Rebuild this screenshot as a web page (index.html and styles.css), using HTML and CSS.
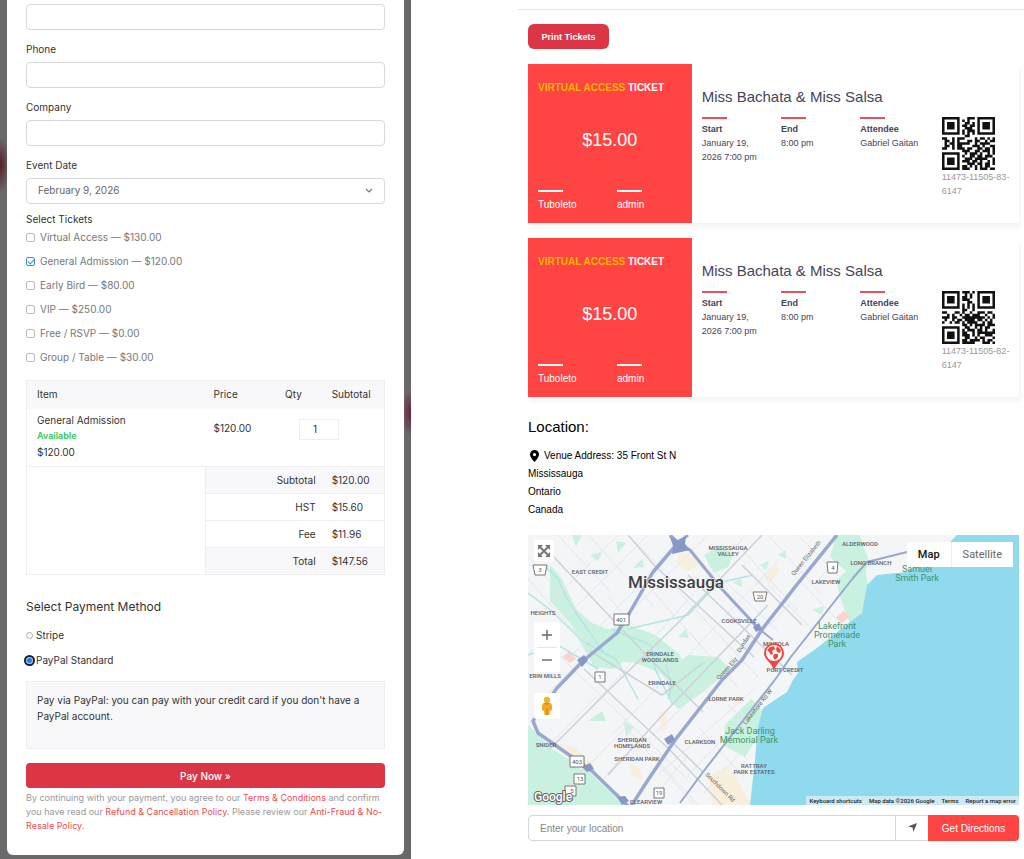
FILE: index.html
```html
<!DOCTYPE html>
<html lang="en">
<head>
    <meta charset="utf-8">
    <meta name="viewport" content="width=device-width, initial-scale=1.0">
    <title>Event Checkout</title>
    <link rel="stylesheet" href="styles.css">
</head>
<body>
    <div class="backdrop">
        <form class="checkout">
            <div class="field">
                <input type="email" class="text-input" aria-label="Email">
            </div>
            <div class="field">
                <label for="phone">Phone</label>
                <input type="tel" id="phone" class="text-input">
            </div>
            <div class="field">
                <label for="company">Company</label>
                <input type="text" id="company" class="text-input">
            </div>
            <div class="field">
                <label for="event-date">Event Date</label>
                <div class="select-wrap">
                    <select id="event-date" class="text-input">
                        <option>February 9, 2026</option>
                    </select>
                    <svg class="chevron" viewBox="0 0 8 6"><path d="M1 1l3 3 3-3" fill="none" stroke="#777" stroke-width="1.2"/></svg>
                </div>
            </div>

            <fieldset class="tickets">
                <legend>Select Tickets</legend>
                <label><input type="checkbox"> Virtual Access — $130.00</label>
                <label><input type="checkbox" checked> General Admission — $120.00</label>
                <label><input type="checkbox"> Early Bird — $80.00</label>
                <label><input type="checkbox"> VIP — $250.00</label>
                <label><input type="checkbox"> Free / RSVP — $0.00</label>
                <label><input type="checkbox"> Group / Table — $30.00</label>
            </fieldset>

            <table class="cart">
                <colgroup>
                    <col class="col-item"><col class="col-price"><col class="col-qty"><col class="col-sub">
                </colgroup>
                <thead>
                    <tr><th>Item</th><th>Price</th><th>Qty</th><th>Subtotal</th></tr>
                </thead>
                <tbody>
                    <tr class="item-row">
                        <td>General Admission<span class="available">Available</span>$120.00</td>
                        <td>$120.00</td>
                        <td colspan="2" class="qty-cell"><input type="text" class="qty" value="1" aria-label="Quantity"></td>
                    </tr>
                    <tr class="total-row shaded">
                        <td rowspan="4" class="blank"></td>
                        <td colspan="2" class="total-label">Subtotal</td><td>$120.00</td>
                    </tr>
                    <tr class="total-row"><td colspan="2" class="total-label">HST</td><td>$15.60</td></tr>
                    <tr class="total-row"><td colspan="2" class="total-label">Fee</td><td>$11.96</td></tr>
                    <tr class="total-row shaded"><td colspan="2" class="total-label">Total</td><td>$147.56</td></tr>
                </tbody>
            </table>

            <fieldset class="methods">
                <legend>Select Payment Method</legend>
                <label><input type="radio" name="method"> Stripe</label>
                <label><input type="radio" name="method" checked> PayPal Standard</label>
            </fieldset>
            <p class="method-note">Pay via PayPal: you can pay with your credit card if you don't have a PayPal account.</p>
            <button type="button" class="pay-btn">Pay Now »</button>
            <p class="legal">By continuing with your payment, you agree to our <a href="#">Terms &amp; Conditions</a> and confirm you have read our <a href="#">Refund &amp; Cancellation Policy</a>. Please review our <a href="#">Anti-Fraud &amp; No-Resale Policy</a>.</p>
        </form>
    </div>

    <main class="order">
        <button type="button" class="print-btn">Print Tickets</button>

        <article class="ticket">
            <div class="ticket-stub">
                <h3><span>VIRTUAL ACCESS</span> TICKET</h3>
                <p class="price">$15.00</p>
                <div class="stub-names"><span>Tuboleto</span><span>admin</span></div>
            </div>
            <div class="ticket-body">
                <h2>Miss Bachata &amp; Miss Salsa</h2>
                <div class="details">
                    <div class="detail"><b>Start</b><p>January 19, 2026 7:00 pm</p></div>
                    <div class="detail"><b>End</b><p>8:00 pm</p></div>
                    <div class="detail"><b>Attendee</b><p>Gabriel Gaitan</p></div>
                    <div class="code">
                        <svg class="qr" data-rows="111111100011101111111 100000101010001000001 101110100110101011101 101110101101101011101 101110100111001011101 100000101011101000001 111111101010101111111 000000000110000000000 110010111000010110101 011010100011011001011 010110111110010111100 011010110000111010011 110010111011001101101 000000001110011011101 111111100101110100101 100000101001101101110 101110100111011111001 101110101110110100101 101110100011101101101 100000101101010101100 111111101110010111011"></svg>
                        <p>11473-11505-83-6147</p>
                    </div>
                </div>
            </div>
        </article>

        <article class="ticket">
            <div class="ticket-stub">
                <h3><span>VIRTUAL ACCESS</span> TICKET</h3>
                <p class="price">$15.00</p>
                <div class="stub-names"><span>Tuboleto</span><span>admin</span></div>
            </div>
            <div class="ticket-body">
                <h2>Miss Bachata &amp; Miss Salsa</h2>
                <div class="details">
                    <div class="detail"><b>Start</b><p>January 19, 2026 7:00 pm</p></div>
                    <div class="detail"><b>End</b><p>8:00 pm</p></div>
                    <div class="detail"><b>Attendee</b><p>Gabriel Gaitan</p></div>
                    <div class="code">
                        <svg class="qr" data-rows="111111101110101111111 100000100101001000001 101110101101001011101 101110101110001011101 101110100011001011101 100000101010101000001 111111101010101111111 000000001100100000000 110001101001001110110 001010010110111001001 111011001111111110101 010010110111101101010 100101101011110010110 000000001101011110111 111111100110010101100 100000101011101101001 101110101100101111111 101110101110101001110 101110100110010110001 100000101101111010110 111111101111100011101"></svg>
                        <p>11473-11505-82-6147</p>
                    </div>
                </div>
            </div>
        </article>

        <section class="location">
            <h2>Location:</h2>
            <address>
                <span class="venue"><svg class="pin" viewBox="0 0 12 14"><path fill-rule="evenodd" d="M6 1a4.500 4.500 0 0 0-4.500 4.500C1.500 8.500 6 13 6 13s4.500-4.500 4.500-7.500A4.500 4.500 0 0 0 6 1zm0 3a1.600 1.600 0 1 1 0 3.200A1.600 1.600 0 0 1 6 4z"/></svg>Venue Address: 35 Front St N</span>
                Mississauga<br>Ontario<br>Canada
            </address>

            <div class="map">
                <svg class="map-canvas" viewBox="0 0 491 270" preserveAspectRatio="xMidYMid slice" role="img" aria-label="Map of Mississauga">
                    <rect width="491" height="270" fill="#f3f5f7"/>
                    <!-- parks -->
                    <g fill="#c9f1df">
                        <path d="M22 30l12 14 14 30 16 14 26 10 14 22-18 14-20-2-10-18-14-26-20-22z"/>
                        <path d="M74 96l26-6 28 10 24 20 10 26-14 8-16-16-24-10-20-2z"/>
                        <path d="M142 134l18-14 30 2 12 12-28 24-24 16-10-12z"/>
                        <path d="M176 20l14-8 16 6-6 14-14 6z"/>
                        <path d="M308 0h24l8 24-2 14 2 14-6 26-12 10-8-20-6-22 10-10-16-14z"/>
                        <path d="M0 190l24 24 36 22 36 34H0z"/>
                        <path d="M197 190l26-26 12 12-4 24-14 22-22-12z"/>
                        <path d="M44 0h10l-6 12zM88 6l10 2-8 10zM62 20l12-3-4 9zM105 33l9-9 2 8zM205 48l8-5 1 9zM150 102l8-8 3 9zM96 186l10 6-8 10zM60 186l14-10 4 10zM284 75l12-4-2 9zM250 20l8-5v9zM232 30l9-4-3 9z"/>
                    </g>
                    <g fill="#f8efdc">
                        <path d="M151 17l14 4 6 10-12 6-10-8zM236 42l12-12 4 6-11 13zM26 208l20 4 22 20-16 2zM130 180l7-6 3 18-6 6zM180 242l20-12 24 40h-40zM102 228l10 6 4 12-12-6z"/>
                    </g>
                    <path d="M308 82l8-6 6 6-8 6zM34 122l8-6 6 8-6 4z" fill="#f8d4cf"/>
                    <!-- creeks -->
                    <path d="M18 32l12 12 8 18 10 16 14 20 10 14 6 8M0 58l24 18 30 30 34 18 22 40M0 120l30-10 40 24M145 170l-18-36-4-24-40-16M138 130l6 20-4 14M225 40l-35 8-30 32-60 14" fill="none" stroke="#b2e5e4" stroke-width="1.500"/>
                    <!-- local streets -->
                    <path d="M30 0l52 56M60 0l66 72M100 0l36 36M0 22l60 66M0 44l58 66M10 100l150 145M80 62l90 100M110 40l100 112M150 56l80 86M180 30l70 66M210 10l60 66M240 0l52 58M270 0l50 50M20 70L90 0M0 120l120-120M44 120l116-120M20 158L180 0M60 176L218 0M84 200L252 24M100 224L262 70M130 240l98-88M160 240l82-84M176 258l60-66M4 228l64-66M40 252l60-62M10 262l40-50M60 262l34-40M120 270l40-50M330 0l-40 46M300 110l-60-60M318 94l-54-56M200 170l34 32M170 192l46 50M130 226l40 44M96 190l70 80" fill="none" stroke="#e3e6ec"/>
                    <path d="M24 20l96 102 55 55M56 134l86 81 52 55M62 116l72 44 41-32M22 214l60-60 70-68 82-86M80 240l60-66 100-104M100 0l26 30 100 92M160 40l104 100M142 205l33 32M214 30l60 60" fill="none" stroke="#cdd1da" stroke-width="1.500"/>
                    <!-- lake -->
                    <path d="M491 0h-62l-7 7-43 30-30 3-10 10-5 28-12 9-33 26-20 14 1 11-5 7-6 12-12 8-12 8-5 19-3 33-5 45h269z" fill="#90daee"/>
                    <!-- highways -->
                    <g fill="none" stroke="#9aa8cf" stroke-linejoin="round">
                        <path d="M379 17l-40 10-14 16-63 80-13 19-74 95-23 31M245 105l-15-12" stroke-width="2"/>
                        <path d="M142 0l8 8-25 29-23 40-13 21-34 28-26 27-24 33 5 12 54 38 38 37 18-28 27-40 47-60 20-20 21-32 22-28 10-13 42-52" stroke-width="3.500"/>
                        <path d="M160 0l-10 8 12 7 30 37 38 41" stroke-width="3"/>
                    </g>
                    <g fill="#8798c6">
                        <path d="M142 2l8 3 8-4-1 8 5 6-9 2-9 2 1-8zM49 125l7-5 4 5-6 7zM136 204l8-5 3 6-7 5zM54 232l8-4 4 6-7 3zM225 92l6-4 3 6-6 3zM89 262l8-1 4 5-7 4z"/>
                    </g>
                    <g class="shields">
                        <path d="M5 30h14l-2 10H7zM225 57h14l-2 9h-10zM86 79h15v11H86zM67 137h10v10H67zM299 27h11l-1 11h-9zM42 221h14v11H42zM46 239h11v10H46zM126 253h10v10h-10zM37 251h11v10H37z"/>
                        <text x="12" y="37">3</text><text x="232" y="64">20</text><text x="93" y="87">401</text><text x="72" y="144">1</text><text x="305" y="35">4</text><text x="49" y="229">403</text><text x="52" y="246">13</text><text x="131" y="260">19</text><text x="44" y="258">5</text>
                    </g>
                    <g class="areas">
                        <text x="62" y="39">EAST CREDIT</text>
                        <text x="200" y="15">MISSISSAUGA</text><text x="200" y="21">VALLEY</text>
                        <text x="332" y="11">ALDERWOOD</text><text x="343" y="30">LONG BRANCH</text>
                        <text x="298" y="49">LAKEVIEW</text><text x="211" y="88">COOKSVILLE</text>
                        <text x="15" y="80">HEIGHTS</text><text x="17" y="143">ERIN MILLS</text>
                        <text x="132" y="121">ERINDALE</text><text x="132" y="127">WOODLANDS</text>
                        <text x="134" y="150">ERINDALE</text><text x="198" y="166">LORNE PARK</text>
                        <text x="248" y="111">MINEOLA</text><text x="257" y="137">PORT CREDIT</text>
                        <text x="104" y="207">SHERIDAN</text><text x="104" y="213">HOMELANDS</text>
                        <text x="109" y="226">SHERIDAN PARK</text><text x="18" y="212">SNIDER</text>
                        <text x="172" y="209">CLARKSON</text><text x="226" y="233">RATTRAY</text>
                        <text x="226" y="239">PARK ESTATES</text><text x="118" y="269">CLEARVIEW</text>
                    </g>
                    <g class="roads">
                        <text transform="translate(266 41) rotate(-51)">Queen Elizabeth</text>
                        <text transform="translate(191 145) rotate(-47)">Queen Eliz</text>
                        <text transform="translate(218 190) rotate(-52)">Lakeshore Rd W</text>
                        <text transform="translate(177 240) rotate(45)">Southdown Rd</text>
                        <text transform="translate(212 118) rotate(-58)">Dundas</text>
                    </g>
                    <g class="park-names">
                        <text x="309" y="94">Lakefront</text><text x="309" y="103">Promenade</text><text x="309" y="112">Park</text>
                        <text x="389" y="37">Samuel</text><text x="389" y="46">Smith Park</text>
                        <text x="222" y="199">Jack Darling</text><text x="221" y="208">Memorial Park</text>
                    </g>
                    <text class="city" x="148" y="53">Mississauga</text>
                    <text class="google" x="6" y="266">Google</text>
                    <!-- venue marker -->
                    <path d="M246 136c-2-9-10-11-10-18a10 10 0 0 1 20 0c0 7-8 9-10 18z" fill="#ef473f"/>
                    <circle cx="246" cy="118" r="8" fill="#fff"/>
                    <path d="M239 115l3-3 4-1 1 3-3 2 1 3-2 1-2-3zM249 111l4 4-1 3-3-1-1-3zM246 119l4 0 0 3-3 3-2-3z" fill="#ef473f"/>
                </svg>
                <button type="button" class="map-btn fullscreen" aria-label="Fullscreen">
                    <svg viewBox="0 0 12 12"><path d="M2 2l8 8M10 2l-8 8" stroke="#777" stroke-width="2"/><path d="M0 0h5L0 5zM12 0v5L7 0zM0 12V7l5 5zM12 12H7l5-5z" fill="#777"/></svg>
                </button>
                <div class="map-btn zoom">
                    <button type="button" aria-label="Zoom in"><svg viewBox="0 0 12 12"><path d="M6 1v10M1 6h10" stroke="#666" stroke-width="1.400"/></svg></button>
                    <button type="button" aria-label="Zoom out"><svg viewBox="0 0 12 12"><path d="M1 6h10" stroke="#666" stroke-width="1.400"/></svg></button>
                </div>
                <button type="button" class="map-btn pegman" aria-label="Street view">
                    <svg viewBox="0 0 12 20"><path d="M2.500 7h7l1.500 2v5l-2 1-.5 4h-5L3 15l-2-1V9z" fill="#f5a623"/><path d="M5.500 13h1v6h-1z" fill="#c87c0c"/><circle cx="6" cy="4" r="3.200" fill="#f7b02c"/><path d="M3.500 7h5l-2.500 2z" fill="#d68a10"/></svg>
                </button>
                <div class="map-type"><button type="button" class="active">Map</button><button type="button">Satellite</button></div>
                <div class="map-credits"><a href="#">Keyboard shortcuts</a><span>Map data ©2026 Google</span><a href="#">Terms</a><a href="#">Report a map error</a></div>
            </div>

            <form class="directions">
                <input type="text" placeholder="Enter your location" aria-label="Your location">
                <button type="button" class="locate" aria-label="Use my location"><svg viewBox="0 0 10 10"><path d="M10 0L6 10 5 5 0 4z" fill="#4d5462"/></svg></button>
                <button type="button" class="go">Get Directions</button>
            </form>
        </section>
    </main>
    <script src="qr.js"></script>
</body>
</html>
```

FILE: styles.css
```css
* {
    box-sizing: border-box;
}

body {
    margin: 0;
    display: grid;
    grid-template-columns: 411fr 613fr;
    background: #fff;
    font-family: "Liberation Sans", Arial, sans-serif;
    font-size: 10px;
}

h2, h3, p, fieldset, legend {
    margin: 0;
    padding: 0;
    border: 0;
}

button, input, select {
    font: inherit;
    color: inherit;
    margin: 0;
}

button {
    border: 0;
    padding: 0;
    cursor: pointer;
}

a {
    text-decoration: none;
}

/* checkout form */
.backdrop {
    min-height: 100vh;
    padding: 0 7px 4px;
    background:
        radial-gradient(ellipse 10px 28px at 0 165px, #551c28, transparent),
        radial-gradient(ellipse 10px 24px at 100% 413px, #6b2033, transparent),
        #69696b;
}

.checkout {
    padding: 4px 19px 22px;
    background: #fff;
    border-radius: 0 0 6px 6px;
    font-family: Inter, sans-serif;
    color: #333;
}

.field {
    margin-bottom: 11px;
}

.field label {
    display: block;
    line-height: 16px;
    margin-bottom: 5px;
}

.text-input {
    display: block;
    width: 100%;
    height: 26px;
    padding: 0 11px;
    border: 1px solid #d9d9d9;
    border-radius: 4px;
    background: #fff;
}

.select-wrap {
    position: relative;
}

select.text-input {
    appearance: none;
    padding-bottom: 2px;
    color: #666;
}

.chevron {
    position: absolute;
    top: 10px;
    right: 12px;
    width: 8px;
}

.tickets {
    color: #777;
    margin-top: -3px;
}

.tickets legend {
    color: #333;
    line-height: 15px;
}

.tickets label {
    display: flex;
    align-items: center;
    gap: 5px;
    line-height: 20px;
    margin-bottom: 4px;
}

input[type="checkbox"] {
    appearance: none;
    display: grid;
    place-items: center;
    width: 9px;
    height: 9px;
    border: 1px solid #bbb;
    border-radius: 2px;
}

input[type="checkbox"]:checked {
    border-color: #3b8fd4;
}

input[type="checkbox"]:checked::before {
    content: "";
    width: 5px;
    height: 3px;
    border: solid #3b8fd4;
    border-width: 0 0 1px 1px;
    transform: rotate(-45deg);
}

.cart {
    width: 100%;
    margin-top: 9px;
    border: 1px solid #eee;
    border-collapse: collapse;
    table-layout: fixed;
    line-height: 14px;
}

.col-item { width: 50%; }
.col-price { width: 20%; }
.col-qty { width: 13%; }
.col-sub { width: 17%; }

.cart th,
.cart td {
    padding: 0 8px;
    text-align: left;
    font-weight: 400;
}

.cart th:first-child,
.cart td:first-child:not(.total-label) {
    padding-left: 10px;
}

.cart th {
    height: 28px;
    padding-bottom: 2px;
    background: #f8f8fa;
}

.item-row td {
    height: 58px;
    padding-bottom: 2px;
}

.item-row td:nth-child(2),
.item-row .qty-cell {
    vertical-align: top;
    padding-top: 12px;
}

.available {
    display: block;
    line-height: 18px;
    font-size: 9px;
    font-weight: 600;
    color: #34c759;
}

.item-row .qty-cell {
    padding-left: 22px;
    padding-top: 10px;
}

.qty {
    width: 40px;
    height: 21px;
    padding: 0 8px 0 0;
    border: 1px solid #eee;
    text-align: center;
}

.total-row td {
    height: 27px;
    border-top: 1px solid #eee;
}

.total-row .blank {
    border-right: 1px solid #eee;
}

.total-row .total-label {
    text-align: right;
}

.shaded td:not(.blank) {
    background: #f8f8fa;
}

.methods {
    margin-top: 24px;
}

.methods legend {
    font-size: 12px;
    line-height: 16px;
    margin-bottom: 8px;
}

.methods label {
    display: flex;
    align-items: center;
    gap: 3px;
    line-height: 25px;
}

input[type="radio"] {
    appearance: none;
    width: 7px;
    height: 7px;
    border: 1px solid #aaa;
    border-radius: 50%;
}

input[type="radio"]:checked {
    border-color: #9fd0ff;
    background: #1f7fe0;
    outline: 2px solid #112233;
}

.method-note {
    min-height: 68px;
    margin: 8px 0 14px;
    padding: 10px;
    background: #f8f8fa;
    border: 1px solid #eee;
    line-height: 16px;
}

.pay-btn {
    display: block;
    width: 100%;
    height: 25px;
    border-radius: 4px;
    background: #dc3545;
    color: #fff;
    font-weight: 500;
}

.legal {
    margin-top: 3px;
    font-size: 9px;
    line-height: 14px;
    color: #999;
}

.legal a {
    color: #f24b50;
}

/* order page */
.order {
    margin: 9px 0 0 107px;
    padding: 14px 5px 18px 10px;
    border-top: 1px solid #e5e5e5;
}

.print-btn {
    display: block;
    width: 81px;
    height: 25px;
    margin-bottom: 15px;
    border-radius: 6px;
    background: #dc3545;
    color: #fff;
    font-size: 9px;
    font-weight: 700;
}

.ticket {
    display: grid;
    grid-template-columns: 1fr 2fr;
    min-height: 159px;
    margin-bottom: 15px;
    background: #fff;
    box-shadow: 2px 4px 5px rgba(0, 0, 0, 0.05);
}

.ticket-stub {
    display: flex;
    flex-direction: column;
    justify-content: space-between;
    padding: 17px 10px 10px;
    background: #ff4444;
    color: #fff;
}

.ticket-stub h3 {
    font-size: 10px;
    line-height: 14px;
}

.ticket-stub h3 span {
    color: #ffb400;
}

.price {
    padding-bottom: 6px;
    font-size: 18px;
    line-height: 22px;
    text-align: center;
}

.stub-names {
    display: grid;
    grid-template-columns: 79px 1fr;
    line-height: 16px;
}

.stub-names span::before,
.detail::before {
    content: "";
    display: block;
    width: 25px;
    height: 2px;
    margin-bottom: 5px;
    background: #fff;
}

.ticket-body {
    padding: 23px 0 0 10px;
    color: #44445a;
}

.ticket-body h2 {
    font-size: 15px;
    font-weight: 400;
    line-height: 20px;
    margin-bottom: 10px;
}

.details {
    display: grid;
    grid-template-columns: repeat(4, 1fr);
    font-size: 9px;
    line-height: 14px;
}

.detail {
    padding-right: 16px;
}

.detail:nth-child(3) {
    padding-right: 0;
}

.detail::before {
    margin-bottom: 3px;
    background: #e2525c;
}

.detail b {
    display: block;
}

.code {
    padding-left: 2px;
    color: #999;
}

.qr {
    display: block;
    width: 53px;
    height: 53px;
}

.location h2 {
    padding-top: 5px;
    font-size: 15px;
    font-weight: 400;
    line-height: 20px;
}

address {
    margin: 10px 0 16px;
    font-style: normal;
    line-height: 18px;
}

.venue {
    display: flex;
    align-items: center;
    gap: 3px;
}

.pin {
    width: 13px;
    height: 14px;
}

.map {
    position: relative;
}

.map-canvas {
    display: block;
    width: 100%;
    font-family: Roboto, sans-serif;
}

.areas {
    font-size: 6px;
    font-weight: 500;
    fill: #5d6067;
    text-anchor: middle;
}

.park-names {
    font-size: 9px;
    fill: #3d9467;
    text-anchor: middle;
}

.roads {
    font-size: 6px;
    fill: #666;
}

.shields {
    font-size: 6px;
    text-anchor: middle;
    fill: #555;
}

.shields path {
    fill: #fff;
    stroke: #777;
}

.city {
    font-size: 17px;
    font-weight: 500;
    fill: #3c4043;
    text-anchor: middle;
    paint-order: stroke;
    stroke: #fff;
}

.google {
    font-size: 12px;
    font-weight: 500;
    fill: #fff;
    stroke: #666;
    stroke-width: 2px;
    paint-order: stroke;
}

.map button,
.map-btn {
    background: #fff;
}

.map-btn {
    position: absolute;
    left: 6px;
    display: grid;
    place-items: center;
    width: 26px;
    border-radius: 2px;
}

.map-btn svg {
    display: block;
    width: 12px;
    margin: auto;
}

.fullscreen {
    top: 5px;
    width: 20px;
    height: 21px;
}

.zoom {
    top: 87px;
}

.zoom button {
    width: 20px;
    height: 25px;
}

.zoom button + button {
    border-top: 1px solid #e6e6e6;
}

.pegman {
    top: 158px;
    height: 26px;
}

.map-type {
    position: absolute;
    top: 7px;
    right: 6px;
    display: flex;
    border-radius: 2px;
    background: #fff;
    font-family: Roboto, sans-serif;
    font-size: 11px;
    line-height: 25px;
    color: #666;
}

.map-type button {
    padding: 0 11px;
}

.map-type .active {
    border-right: 1px solid #eee;
    font-weight: 500;
    color: #111;
}

.map-credits {
    position: absolute;
    right: 0;
    bottom: 0;
    display: flex;
    gap: 7px;
    padding: 0 3px;
    background: rgba(245, 245, 245, 0.6);
    font-family: Roboto, sans-serif;
    font-size: 6px;
    font-weight: 500;
    line-height: 9px;
    color: #222;
}

.map-credits a {
    color: inherit;
}

.directions {
    display: flex;
    height: 26px;
    margin-top: 10px;
}

.directions input {
    flex: 1;
    min-width: 0;
    padding: 0 11px;
    border: 1px solid #d5d7dc;
    border-radius: 4px 0 0 4px;
}

.directions input::placeholder {
    color: #888;
}

.locate {
    width: 32px;
    background: #fff;
    border: solid #d5d7dc;
    border-width: 1px 0;
}

.locate svg {
    width: 9px;
}

.go {
    width: 91px;
    border-radius: 0 4px 4px 0;
    background: #ff4444;
    color: #fff;
}
```

FILE: qr.js
```js
// draw each QR code from its rows of modules
document.querySelectorAll('.qr').forEach(svg => {
    const rows = svg.dataset.rows.split(' ');
    let d = '';
    rows.forEach((row, y) => {
        [...row].forEach((cell, x) => {
            if (cell === '1') {
                d += `M${x} ${y}h1v1h-1z`;
            }
        });
    });
    svg.setAttribute('viewBox', `0 0 ${rows[0].length} ${rows.length}`);
    svg.innerHTML = `<path d="${d}" fill="#111"/>`;
});
```
